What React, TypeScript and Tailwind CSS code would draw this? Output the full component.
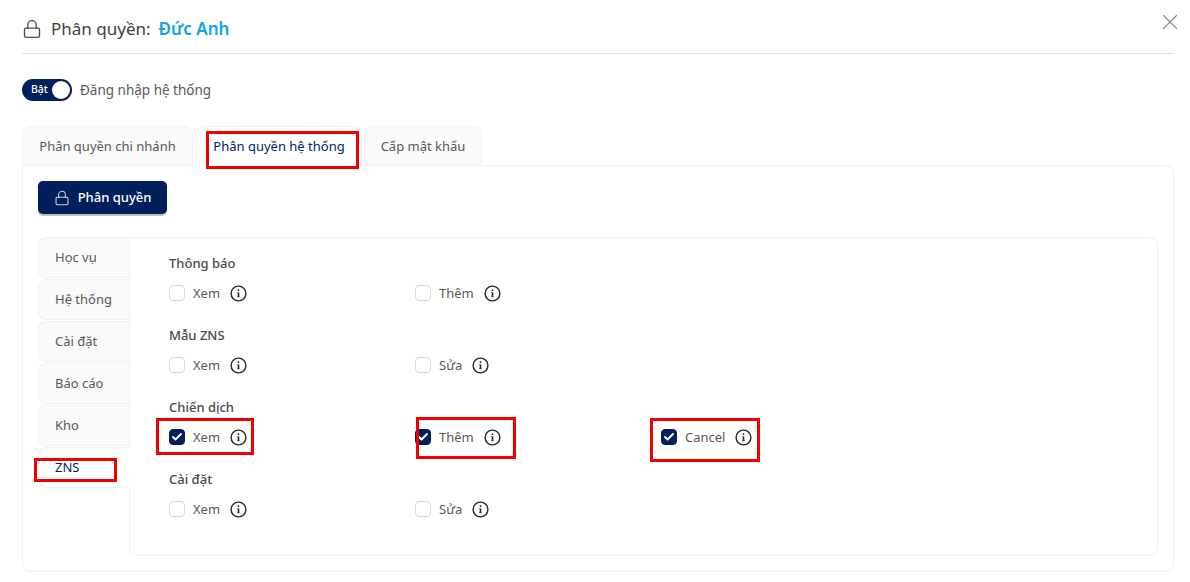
import { Check, Lock, X } from 'lucide-react';
import type { ReactNode } from 'react';

const font = '[font-family:"Noto_Sans","Open_Sans",sans-serif]';

type Perm = {
    label: string;
    checked?: boolean;
    // red annotation drawn over the row in the screenshot
    mark?: string;
};

const sideTabs = ['Học vụ', 'Hệ thống', 'Cài đặt', 'Báo cáo', 'Kho'];

const groups: { title: string; perms: Perm[] }[] = [
    { title: 'Thông báo', perms: [{ label: 'Xem' }, { label: 'Thêm' }] },
    { title: 'Mẫu ZNS', perms: [{ label: 'Xem' }, { label: 'Sửa' }] },
    {
        title: 'Chiến dịch',
        perms: [
            { label: 'Xem', checked: true, mark: '-left-[13px] -top-[10px] h-[37px] w-[98px]' },
            { label: 'Thêm', checked: true, mark: 'left-[1px] -top-[11px] h-[42px] w-[100px]' },
            { label: 'Cancel', checked: true, mark: '-left-[11px] -top-[10px] h-[44px] w-[110px]' },
        ],
    },
    { title: 'Cài đặt', perms: [{ label: 'Xem' }, { label: 'Sửa' }] },
];

function InfoIcon() {
    return (
        <svg width="17" height="17" viewBox="0 0 17 17" fill="none" className="shrink-0 text-[#262626]">
            <circle cx="8.5" cy="8.5" r="7.4" stroke="currentColor" strokeWidth="1.4" />
            <path d="M8.5 7.6v4" stroke="currentColor" strokeWidth="1.6" />
            <path d="M7.4 7.7h1.1M7.4 11.7h2.2" stroke="currentColor" strokeWidth="1" />
            <circle cx="8.5" cy="5.2" r="0.9" fill="currentColor" />
        </svg>
    );
}

function RedBox({ className }: { className: string }) {
    return <span className={`pointer-events-none absolute border-[3px] border-[#f00000] ${className}`} />;
}

function PermItem({ label, checked, mark }: Perm) {
    return (
        <div className="relative flex h-[18px] w-[246px] items-center">
            <span
                className={`flex size-4 items-center justify-center rounded-[4px] border ${
                    checked ? 'border-[#011f5b] bg-[#011f5b]' : 'border-[#d9d9d9] bg-white'
                }`}
            >
                {checked && <Check className="size-3 text-white" strokeWidth={4} />}
            </span>
            <span className="ml-2 text-[13px] leading-[18px] text-[#595959]">{label}</span>
            <span className="ml-[10px]">
                <InfoIcon />
            </span>
            {mark && <RedBox className={mark} />}
        </div>
    );
}

function TopTab({ children, active, className }: { children: ReactNode; active?: boolean; className: string }) {
    return (
        <div
            className={`relative flex h-10 items-start justify-center rounded-t-lg border border-[#f0f0f0] pt-[10px] text-[13px] leading-[18px] ${
                active ? 'z-10 border-b-white bg-white text-[#011f5b]' : 'bg-[#fafafa] text-[#595959]'
            } ${className}`}
        >
            {children}
        </div>
    );
}

export default function App() {
    return (
        <div className={`relative h-[582px] w-[1190px] overflow-hidden bg-white pr-[16px] pl-[22px] ${font}`}>
            <header className="flex h-[54px] items-center border-b border-[#dedede] pt-[4px]">
                <Lock className="size-5 text-[#4a4a4a]" strokeWidth={1.6} />
                <span className="ml-[9px] text-[17px] text-[#404040]">Phân quyền:</span>
                <span className="ml-[8px] text-[17px] font-semibold text-[#0fa5e0]">Đức Anh</span>
            </header>
            <button className="absolute top-[9px] right-[7px] text-[#8c8c8c]">
                <X className="size-[26px]" strokeWidth={1.1} />
            </button>

            <div className="mt-[25px] flex items-center">
                <div className="flex h-[22px] w-[50px] items-center justify-between rounded-full bg-[#011f5b] pr-[2px] pl-[9px]">
                    <span className="text-[10.5px] font-medium text-white">Bật</span>
                    <span className="size-[18px] rounded-full bg-white" />
                </div>
                <span className="ml-2 text-[13.5px] text-[#595959]">Đăng nhập hệ thống</span>
            </div>

            <div className="mt-[25px] flex">
                <TopTab className="w-[171px]">Phân quyền chi nhánh</TopTab>
                <TopTab active className="ml-[3px] w-[166px]">
                    Phân quyền hệ thống
                    <RedBox className="top-[4px] left-[9px] h-[38px] w-[153px]" />
                </TopTab>
                <TopTab className="ml-[2px] w-[118px]">Cấp mật khẩu</TopTab>
            </div>

            <section className="-mt-px h-[407px] rounded-b-lg rounded-tr-lg border border-[#f0f0f0] px-[15px] pt-[15px]">
                <button className="flex h-[33px] w-[129px] items-center justify-center gap-[8px] rounded-[5px] bg-[#011f5b] text-[13px] font-medium text-white shadow-[0_2px_0_rgba(0,0,0,0.25)]">
                    <Lock className="size-4 text-white/80" strokeWidth={1.6} />
                    Phân quyền
                </button>

                <div className="mt-[23px] flex">
                    <nav className="flex w-[92px] shrink-0 flex-col gap-px">
                        {sideTabs.map((tab) => (
                            <div
                                key={tab}
                                className="h-[41px] rounded-l-lg border border-r-0 border-[#f0f0f0] bg-[#fafafa] pt-[10px] pl-4 text-[13px] leading-[18px] text-[#595959]"
                            >
                                {tab}
                            </div>
                        ))}
                        <div className="relative z-10 h-[41px] rounded-l-lg border border-r-0 border-[#f0f0f0] bg-white pt-[10px] pl-4 text-[13px] leading-[18px] text-[#011f5b]">
                            ZNS
                            <RedBox className="top-[10px] -left-[5px] h-[24px] w-[83px]" />
                        </div>
                    </nav>

                    <div className="-ml-px h-[319px] flex-1 rounded-r-lg rounded-bl-lg border border-[#f0f0f0] pt-[15px] pl-[39px]">
                        {groups.map((group) => (
                            <div key={group.title} className="mb-[23px]">
                                <h3 className="text-[13px] leading-[20px] font-medium text-[#4a4a4a]">{group.title}</h3>
                                <div className="mt-[11px] flex">
                                    {group.perms.map((perm) => (
                                        <PermItem key={perm.label} {...perm} />
                                    ))}
                                </div>
                            </div>
                        ))}
                    </div>
                </div>
            </section>
        </div>
    );
}
